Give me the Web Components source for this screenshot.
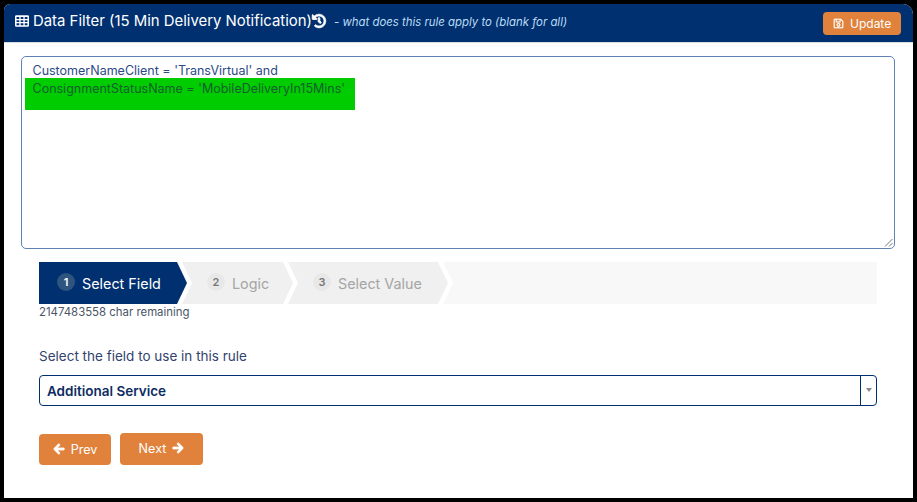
<!DOCTYPE html>
<html>
<head>
<meta charset="utf-8">
<title>Data Filter</title>
<style>
  html, body { margin: 0; height: 100%; background: #000; }
  body { padding: 4px 4px 4px 4px; box-sizing: border-box; font-family: Inter, "Liberation Sans", sans-serif; overflow: hidden; }
</style>
</head>
<body>
<filter-page>
  <filter-header slot="header" title-text="Data Filter (15 Min Delivery Notification)" hint="- what does this rule apply to (blank for all)"></filter-header>
  <rule-box>
    <div>CustomerNameClient = 'TransVirtual' and</div>
    <div class="hl">ConsignmentStatusName = 'MobileDeliveryIn15Mins'</div>
  </rule-box>
  <step-bar active="1" steps="Select Field,Logic,Select Value"></step-bar>
  <char-count>2147483558 char remaining</char-count>
  <field-select label="Select the field to use in this rule" value="Additional Service"></field-select>
  <nav-buttons></nav-buttons>
</filter-page>

<script>
const ICONS = {
  save: ['0 0 448 512', 'M433.941 129.941l-83.882-83.882A48 48 0 0 0 316.118 32H48C21.49 32 0 53.49 0 80v352c0 26.51 21.49 48 48 48h352c26.51 0 48-21.49 48-48V163.882a48 48 0 0 0-14.059-33.941zM272 80v80H144V80h128zm122 352H54a6 6 0 0 1-6-6V86a6 6 0 0 1 6-6h42v104c0 13.255 10.745 24 24 24h176c13.255 0 24-10.745 24-24V83.882l78.243 78.243a6 6 0 0 1 1.757 4.243V426a6 6 0 0 1-6 6zM224 232c-48.523 0-88 39.477-88 88s39.477 88 88 88 88-39.477 88-88-39.477-88-88-88zm0 128c-22.056 0-40-17.944-40-40s17.944-40 40-40 40 17.944 40 40-17.944 40-40 40z'],
  history: ['0 0 512 512', 'M504 255.531c.253 136.64-111.18 248.372-247.82 248.468-59.015.042-113.223-20.53-155.822-54.911-11.077-8.94-11.905-25.541-1.839-35.607l11.267-11.267c8.609-8.609 22.353-9.551 31.891-1.984C173.062 425.135 212.781 440 256 440c101.705 0 184-82.311 184-184 0-101.705-82.311-184-184-184-48.814 0-93.149 18.969-126.068 49.932l50.754 50.754c10.08 10.08 2.941 27.314-11.313 27.314H24c-8.837 0-16-7.163-16-16V38.627c0-14.254 17.234-21.393 27.314-11.314l49.372 49.372C129.209 34.136 189.552 8 256 8c136.81 0 247.747 110.78 248 247.531zm-180.912 78.784l9.823-12.63c8.138-10.463 6.253-25.542-4.21-33.679L288 256.349V152c0-13.255-10.745-24-24-24h-16c-13.255 0-24 10.745-24 24v135.651l65.409 50.874c10.463 8.137 25.541 6.253 33.679-4.21z'],
  left: ['0 0 448 512', 'M257.5 445.1l-22.2 22.2c-9.4 9.4-24.6 9.4-33.9 0L7 273c-9.4-9.4-9.4-24.6 0-33.9L201.4 44.7c9.4-9.4 24.6-9.4 33.9 0l22.2 22.2c9.5 9.5 9.3 25-.4 34.3L136.6 216H424c13.3 0 24 10.7 24 24v32c0 13.3-10.7 24-24 24H136.6l120.5 114.8c9.8 9.3 10 24.8.4 34.3z'],
  right: ['0 0 448 512', 'M190.5 66.9l22.2-22.2c9.4-9.4 24.6-9.4 33.9 0L441 239c9.4 9.4 9.4 24.6 0 33.9L246.6 467.3c-9.4 9.4-24.6 9.4-33.9 0l-22.2-22.2c-9.5-9.5-9.3-25 .4-34.3L311.4 296H24c-13.3 0-24-10.7-24-24v-32c0-13.3 10.7-24 24-24h287.4L190.9 101.2c-9.8-9.3-10-24.8-.4-34.3z'],
  table: ['0 0 512 512', 'M48 48h416a48 48 0 0 1 48 48v320a48 48 0 0 1-48 48H48a48 48 0 0 1-48-48V96a48 48 0 0 1 48-48zM56 112v72h100v-72zm150 0v72h100v-72zm150 0v72h100v-72zM56 224v72h100v-72zm150 0v72h100v-72zm150 0v72h100v-72zM56 336v72h100v-72zm150 0v72h100v-72zm150 0v72h100v-72z']
};
// weight thickens the glyph a bit, the reference icons come from an icon font and render heavier
const icon = (name, size, weight = 0) => `<svg width="${size}" height="${size}" viewBox="${ICONS[name][0]}" fill="currentColor" fill-rule="evenodd" stroke="currentColor" stroke-width="${weight}" style="overflow:visible"><path d="${ICONS[name][1]}"/></svg>`;

class FilterPage extends HTMLElement {
  constructor() {
    super();
    this.attachShadow({ mode: 'open' });
    this.shadowRoot.innerHTML = `
      <style>
        :host {
          display: block;
          height: 494px;
          background: #fff;
          border-radius: 6px 10px 0 0;
          overflow: hidden;
        }
        .body {
          display: flex;
          flex-direction: column;
        }
      </style>
      <slot name="header"></slot>
      <div class="body"><slot></slot></div>
    `;
  }
}

class FilterHeader extends HTMLElement {
  constructor() {
    super();
    this.attachShadow({ mode: 'open' });
  }

  connectedCallback() {
    this.shadowRoot.innerHTML = `
      <style>
        :host {
          display: flex;
          align-items: center;
          height: 39px;
          box-sizing: border-box;
          padding: 0 12px 0 11px;
          background: #003070;
          border-bottom: 1px solid #d9dde3;
          color: #fff;
        }
        .ti { display: flex; margin-right: 4px; margin-top: -4px; }
        h1 {
          margin: 0;
          font-size: 14.9px;
          font-weight: 400;
          line-height: 20px;
          margin-top: -4px;
          white-space: nowrap;
        }
        .hi { display: flex; margin-top: -4px; }
        em {
          margin: -2px 0 0 8px;
          font-size: 11.4px;
          color: #bcdcf4;
          white-space: nowrap;
        }
        button {
          margin-left: auto;
          margin-top: 1px;
          display: flex;
          align-items: center;
          gap: 6px;
          width: 78px;
          height: 23px;
          padding: 0 0 0 10px;
          box-sizing: border-box;
          border: none;
          border-radius: 4px;
          background: #e0823c;
          color: #fff;
          font: 400 12px Inter, "Liberation Sans", sans-serif;
        }
      </style>
      <span class="ti">${icon('table', 14)}</span>
      <h1>${this.getAttribute('title-text')}</h1>
      <span class="hi">${icon('history', 14, 30)}</span>
      <em>${this.getAttribute('hint')}</em>
      <button>${icon('save', 11, 8)}Update</button>
    `;
  }
}

class RuleBox extends HTMLElement {
  constructor() {
    super();
    this.attachShadow({ mode: 'open' });
    this.shadowRoot.innerHTML = `
      <style>
        :host {
          display: block;
          position: relative;
          height: 193px;
          box-sizing: border-box;
          margin: 13px 18px 13px 17px;
          padding: 6px 3px;
          border: 1px solid #5f82b4;
          border-radius: 5px;
          font-size: 12.5px;
          line-height: 15px;
          color: #2b4a86;
        }
        svg { position: absolute; right: 1px; bottom: 1px; }
        ::slotted(div) { padding-left: 7.5px; }
        ::slotted(.hl) {
          width: 322.5px;
          height: 29px;
          padding-top: 3px;
          box-sizing: content-box;
          background: #00cc00;
          color: #14602f;
        }
      </style>
      <slot></slot>
      <svg width="9" height="9" viewBox="0 0 9 9" stroke="#777" fill="none"><path d="M1 8.5 8.5 1M5 8.5 8.5 5"/></svg>
    `;
  }
}

class StepBar extends HTMLElement {
  constructor() {
    super();
    this.attachShadow({ mode: 'open' });
  }

  connectedCallback() {
    const widths = [148, 111, 160];
    const steps = this.getAttribute('steps').split(',');
    const active = Number(this.getAttribute('active'));
    const items = steps.map((s, i) => `
      <div class="step ${i + 1 === active ? 'on' : ''} ${i === 0 ? 'first' : ''}" style="width:${widths[i]}px">
        <span class="n">${i + 1}</span><span>${s}</span>
      </div>`).join('');
    this.shadowRoot.innerHTML = `
      <style>
        :host {
          display: flex;
          height: 42px;
          margin: 0 36px 0 35px;
        }
        .step {
          flex: none;
          display: flex;
          align-items: center;
          gap: 7px;
          box-sizing: border-box;
          margin-right: -5px;
          padding-left: 25px;
          background: #f0f0f0;
          color: #a5a5a5;
          font-size: 14.35px;
          clip-path: polygon(0 0, calc(100% - 10px) 0, 100% 50%, calc(100% - 10px) 100%, 0 100%, 10px 50%);
        }
        .step.first {
          padding-left: 18px;
          clip-path: polygon(0 0, calc(100% - 10px) 0, 100% 50%, calc(100% - 10px) 100%, 0 100%);
        }
        .step.on { background: #003070; color: #fff; }
        .n {
          display: flex;
          align-items: center;
          justify-content: center;
          width: 18px;
          height: 18px;
          margin-top: -3px;
          border-radius: 50%;
          background: #e8e8e8;
          color: #777;
          font-size: 11px;
          font-weight: 600;
        }
        .on .n { background: #2e5580; color: #fff; }
        .rest {
          flex: 1;
          background: #f8f8f8;
          clip-path: polygon(0 0, 100% 0, 100% 100%, 0 100%, 10px 50%);
        }
      </style>
      ${items}
      <div class="rest"></div>
    `;
  }
}

class CharCount extends HTMLElement {
  constructor() {
    super();
    this.attachShadow({ mode: 'open' });
    this.shadowRoot.innerHTML = `
      <style>
        :host {
          display: block;
          margin: 1px 35px 0;
          font-size: 11.4px;
          line-height: 14px;
          color: #4a5568;
        }
      </style>
      <slot></slot>
    `;
  }
}

class FieldSelect extends HTMLElement {
  constructor() {
    super();
    this.attachShadow({ mode: 'open' });
  }

  connectedCallback() {
    this.shadowRoot.innerHTML = `
      <style>
        :host {
          display: block;
          margin: 29px 36px 0 35px;
        }
        label {
          display: block;
          font-size: 13.5px;
          line-height: 16px;
          color: #33436e;
          margin-bottom: 11px;
        }
        .box {
          display: flex;
          align-items: stretch;
          height: 31px;
          box-sizing: border-box;
          border: 1px solid #003070;
          border-radius: 4px;
        }
        .val {
          flex: 1;
          padding-left: 7px;
          font-size: 13.5px;
          font-weight: 600;
          line-height: 30px;
          color: #0d2c63;
        }
        .arr {
          width: 15px;
          display: flex;
          align-items: center;
          justify-content: center;
          border-left: 1px solid #003070;
        }
        .arr i {
          width: 0;
          height: 0;
          margin-top: -2px;
          border: 3.5px solid transparent;
          border-top: 4px solid #8a8a8a;
          border-bottom: 0;
        }
      </style>
      <label>${this.getAttribute('label')}</label>
      <div class="box">
        <div class="val">${this.getAttribute('value')}</div>
        <div class="arr"><i></i></div>
      </div>
    `;
  }
}

class NavButtons extends HTMLElement {
  constructor() {
    super();
    this.attachShadow({ mode: 'open' });
    this.shadowRoot.innerHTML = `
      <style>
        :host {
          display: flex;
          align-items: flex-end;
          gap: 9px;
          margin: 27px 35px 0;
        }
        button {
          display: flex;
          align-items: center;
          justify-content: center;
          gap: 6px;
          border: none;
          border-radius: 4px;
          padding: 0;
          background: #e0823c;
          color: #fff;
          font: 400 12.6px Inter, "Liberation Sans", sans-serif;
        }
        .prev { width: 72px; height: 31px; padding-bottom: 1px; }
        .next { width: 83px; height: 32px; padding-bottom: 2px; }
      </style>
      <button class="prev">${icon('left', 12, 40)}Prev</button>
      <button class="next">Next${icon('right', 12, 40)}</button>
    `;
  }
}

customElements.define('filter-page', FilterPage);
customElements.define('filter-header', FilterHeader);
customElements.define('rule-box', RuleBox);
customElements.define('step-bar', StepBar);
customElements.define('char-count', CharCount);
customElements.define('field-select', FieldSelect);
customElements.define('nav-buttons', NavButtons);
</script>
</body>
</html>
